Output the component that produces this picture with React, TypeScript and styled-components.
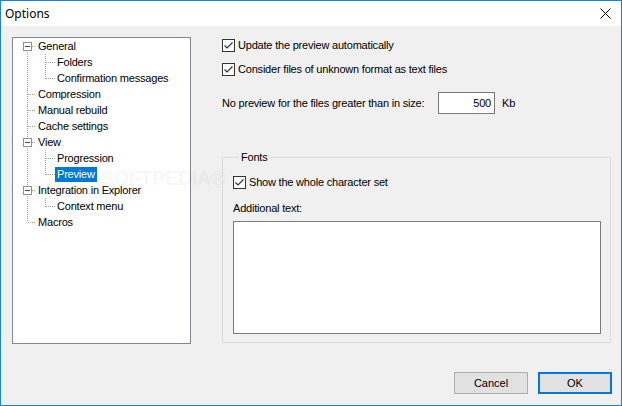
import React, { FC } from 'react'
import styled, { createGlobalStyle } from 'styled-components'

const GlobalStyle = createGlobalStyle`
  html, body {
    margin: 0;
    padding: 0;
    background: #ffffff;
  }
  * {
    box-sizing: border-box;
  }
`

const Window = styled.div`
  position: relative;
  width: 622px;
  height: 406px;
  border: 1px solid #1883d7;
  background: #f0f0f0;
  display: flex;
  flex-direction: column;
  font-family: 'Liberation Sans', Arial, sans-serif;
  font-size: 11px;
  letter-spacing: -0.2px;
  color: #000;
  overflow: hidden;
`

const TitleBar = styled.div`
  height: 25px;
  background: #ffffff;
  display: flex;
  align-items: center;
  justify-content: space-between;
  padding: 0 10px 0 4px;
  font-family: 'Noto Sans', 'Open Sans', sans-serif;
  font-size: 12px;
  letter-spacing: 0;
`

const Body = styled.div`
  flex: 1;
  display: flex;
  flex-direction: column;
  padding: 11px 10px 11px 11px;
`

const MainRow = styled.div`
  display: flex;
  height: 307px;
  gap: 31px;
`

const Tree = styled.div`
  width: 179px;
  height: 307px;
  background: #fff;
  border: 1px solid #828790;
`

const TreeRow = styled.div`
  display: flex;
  align-items: center;
  height: 16px;
`

const TreeLabel = styled.span<{ $selected?: boolean }>`
  display: inline-flex;
  align-items: center;
  height: 15px;
  padding: 0 2px;
  line-height: 15px;
  white-space: nowrap;
  background: ${(p) => (p.$selected ? '#0078d7' : 'transparent')};
  color: ${(p) => (p.$selected ? '#fff' : '#000')};
`

const RightPanel = styled.div`
  width: 389px;
  display: flex;
  flex-direction: column;
`

const CheckRow = styled.label<{ $top: number }>`
  display: flex;
  align-items: center;
  gap: 3px;
  height: 14px;
  margin-top: ${(p) => p.$top}px;
  white-space: nowrap;
`

const Box = styled.span`
  width: 13px;
  height: 13px;
  border: 1px solid #333;
  background: #fff;
  display: inline-flex;
  align-items: center;
  justify-content: center;
  flex-shrink: 0;
`

const SizeRow = styled.div`
  display: flex;
  align-items: center;
  margin-top: 16px;
  height: 22px;
`

const SizeLabel = styled.span`
  width: 216px;
`

const NumberInput = styled.div`
  width: 57px;
  height: 22px;
  border: 1px solid #7a7a7a;
  background: #fff;
  display: flex;
  align-items: center;
  justify-content: flex-end;
  padding-right: 3px;
`

const Unit = styled.span`
  margin-left: 7px;
`

const GroupBox = styled.fieldset`
  margin: 37px 0 0 0;
  padding: 5px 9px 9px 10px;
  height: 192px;
  border: 1px solid #dcdcdc;
  display: flex;
  flex-direction: column;
  min-width: 0;
`

const Legend = styled.legend`
  margin-left: 6px;
  padding: 0 2px;
  line-height: 13px;
  font-size: 11px;
`

const FieldLabel = styled.div`
  margin-top: 12px;
  height: 14px;
  line-height: 14px;
`

const TextArea = styled.div`
  margin-top: 6px;
  width: 368px;
  height: 113px;
  background: #fff;
  border: 1px solid #7a7a7a;
`

const ButtonRow = styled.div`
  display: flex;
  justify-content: flex-end;
  gap: 10px;
  margin-top: 28px;
  margin-right: -1px;
`

const Button = styled.div<{ $default?: boolean }>`
  width: 74px;
  height: 22px;
  display: flex;
  align-items: center;
  justify-content: center;
  background: #e1e1e1;
  letter-spacing: 0;
  border: ${(p) => (p.$default ? '2px solid #0078d7' : '1px solid #adadad')};
`

const Watermark = styled.div`
  position: absolute;
  left: 100px;
  top: 166px;
  font-family: 'Liberation Sans', Arial, sans-serif;
  font-weight: bold;
  font-size: 20px;
  letter-spacing: -0.5px;
  color: rgba(0, 0, 0, 0.05);
  pointer-events: none;
`

type Node = {
  label: string
  level: number
  expander?: boolean
  first?: boolean
  last?: boolean
  selected?: boolean
}

const nodes: Node[] = [
  { label: 'General', level: 0, expander: true, first: true },
  { label: 'Folders', level: 1 },
  { label: 'Confirmation messages', level: 1, last: true },
  { label: 'Compression', level: 0 },
  { label: 'Manual rebuild', level: 0 },
  { label: 'Cache settings', level: 0 },
  { label: 'View', level: 0, expander: true },
  { label: 'Progression', level: 1 },
  { label: 'Preview', level: 1, last: true, selected: true },
  { label: 'Integration in Explorer', level: 0, expander: true },
  { label: 'Context menu', level: 1, last: true },
  { label: 'Macros', level: 0, last: true },
]

const LINE = '#a0a0a0'

const Guides: FC<{ node: Node }> = ({ node }) => {
  const w = 23 + 19 * node.level
  const dash = { stroke: LINE, strokeDasharray: '1 1', shapeRendering: 'crispEdges' as const }
  let rootY1 = 0
  let rootY2 = 16
  if (node.level === 0 && node.first) rootY1 = 8
  if (node.level === 0 && node.last) rootY2 = 8
  return (
    <svg width={w} height={16} style={{ flexShrink: 0 }}>
      <line x1={14.5} y1={rootY1} x2={14.5} y2={rootY2} {...dash} />
      {node.level === 0 && <line x1={15} y1={8.5} x2={w} y2={8.5} {...dash} />}
      {node.level === 1 && (
        <>
          <line x1={32.5} y1={0} x2={32.5} y2={node.last ? 9 : 16} {...dash} />
          <line x1={33} y1={8.5} x2={w} y2={8.5} {...dash} />
        </>
      )}
      {node.expander && (
        <>
          <rect x={10.5} y={4.5} width={8} height={8} fill="#fff" stroke="#919191" shapeRendering="crispEdges" />
          <line x1={12} y1={8.5} x2={17} y2={8.5} stroke="#2b4f9e" shapeRendering="crispEdges" />
        </>
      )}
    </svg>
  )
}

const Check: FC = () => (
  <Box>
    <svg width={11} height={11} viewBox="0 0 11 11">
      <path d="M1.5 5.5 L4 8 L9.5 2.5" fill="none" stroke="#333" strokeWidth={1.2} />
    </svg>
  </Box>
)

const CloseIcon: FC = () => (
  <svg width={11} height={11} viewBox="0 0 11 11">
    <path d="M0.5 0.5 L10.5 10.5 M10.5 0.5 L0.5 10.5" stroke="#000" strokeWidth={1} />
  </svg>
)

const App: FC = () => {
  return (
    <>
      <GlobalStyle />
      <Window>
        <TitleBar>
          <span>Options</span>
          <CloseIcon />
        </TitleBar>
        <Body>
          <MainRow>
            <Tree>
              {nodes.map((n) => (
                <TreeRow key={n.label}>
                  <Guides node={n} />
                  <TreeLabel $selected={n.selected}>{n.label}</TreeLabel>
                </TreeRow>
              ))}
            </Tree>
            <RightPanel>
              <CheckRow $top={1}>
                <Check />
                <span>Update the preview automatically</span>
              </CheckRow>
              <CheckRow $top={10}>
                <Check />
                <span>Consider files of unknown format as text files</span>
              </CheckRow>
              <SizeRow>
                <SizeLabel>No preview for the files greater than in size:</SizeLabel>
                <NumberInput>500</NumberInput>
                <Unit>Kb</Unit>
              </SizeRow>
              <GroupBox>
                <Legend>Fonts</Legend>
                <CheckRow $top={6}>
                  <Check />
                  <span>Show the whole character set</span>
                </CheckRow>
                <FieldLabel>Additional text:</FieldLabel>
                <TextArea />
              </GroupBox>
            </RightPanel>
          </MainRow>
          <ButtonRow>
            <Button>Cancel</Button>
            <Button $default>OK</Button>
          </ButtonRow>
        </Body>
        <Watermark>SOFTPEDIA®</Watermark>
      </Window>
    </>
  )
}

export default App
